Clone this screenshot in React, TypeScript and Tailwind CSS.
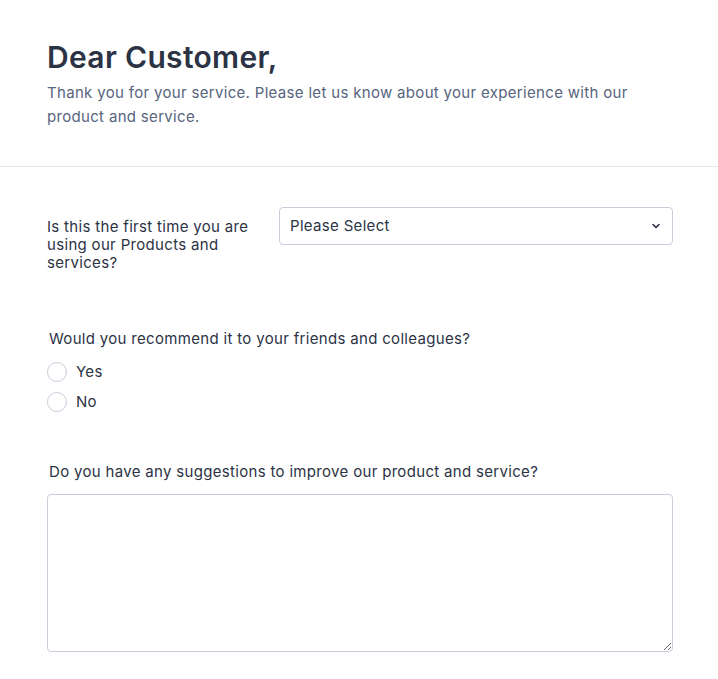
import React from 'react';

export default function App() {
  return (
    <div className="min-h-screen bg-white text-[#2c3345] tracking-[0.02em]" style={{ fontFamily: 'Inter, "Noto Sans", sans-serif' }}>
      {/* header */}
      <header className="pt-[39px] pb-[37px] pl-[47px] pr-[45px] border-b border-[#e3e5e9]">
        <h1 className="text-[30px] leading-[36px] font-semibold text-[#2c3345]">Dear Customer,</h1>
        <p className="mt-[6px] text-[15px] leading-[24px] text-[#57647e] pr-[40px]">
          Thank you for your service. Please let us know about your experience with our product and service.
        </p>
      </header>

      <main className="pl-[47px] pr-[45px] pt-[40px] flex flex-col">
        {/* question 1 */}
        <div className="flex items-start">
          <label className="w-[232px] pr-[12px] pt-[11px] text-[15px] leading-[18px] text-[#2c3345]">
            Is this the first time you are using our Products and services?
          </label>
          <div className="flex-1 h-[38px] border border-[#c8ceda] rounded-[4px] flex items-center justify-between pl-[10px] pr-[10px]">
            <span className="text-[15px] text-[#2c3345]">Please Select</span>
            <svg width="12" height="12" viewBox="0 0 12 12" fill="none">
              <path d="M3 4.5L6 7.5L9 4.5" stroke="#2c3345" strokeWidth="1.6" strokeLinecap="round" strokeLinejoin="round" />
            </svg>
          </div>
        </div>

        {/* question 2 */}
        <div className="mt-[58px] pl-[2px] text-[15px] leading-[18px]">Would you recommend it to your friends and colleagues?</div>
        <div className="mt-[14px] flex flex-col gap-[10px]">
          {['Yes', 'No'].map(o => (
            <label key={o} className="flex items-center gap-[9px] h-[20px]">
              <span className="w-[20px] h-[20px] rounded-full border border-[#c8ceda] bg-white" />
              <span className="text-[15px] text-[#2c3345]">{o}</span>
            </label>
          ))}
        </div>

        {/* question 3 */}
        <div className="mt-[51px] pl-[2px] text-[15px] leading-[18px]">Do you have any suggestions to improve our product and service?</div>
        <textarea className="mt-[13px] h-[158px] w-full border border-[#c8ceda] rounded-[4px] outline-none" />
      </main>
    </div>
  );
}
